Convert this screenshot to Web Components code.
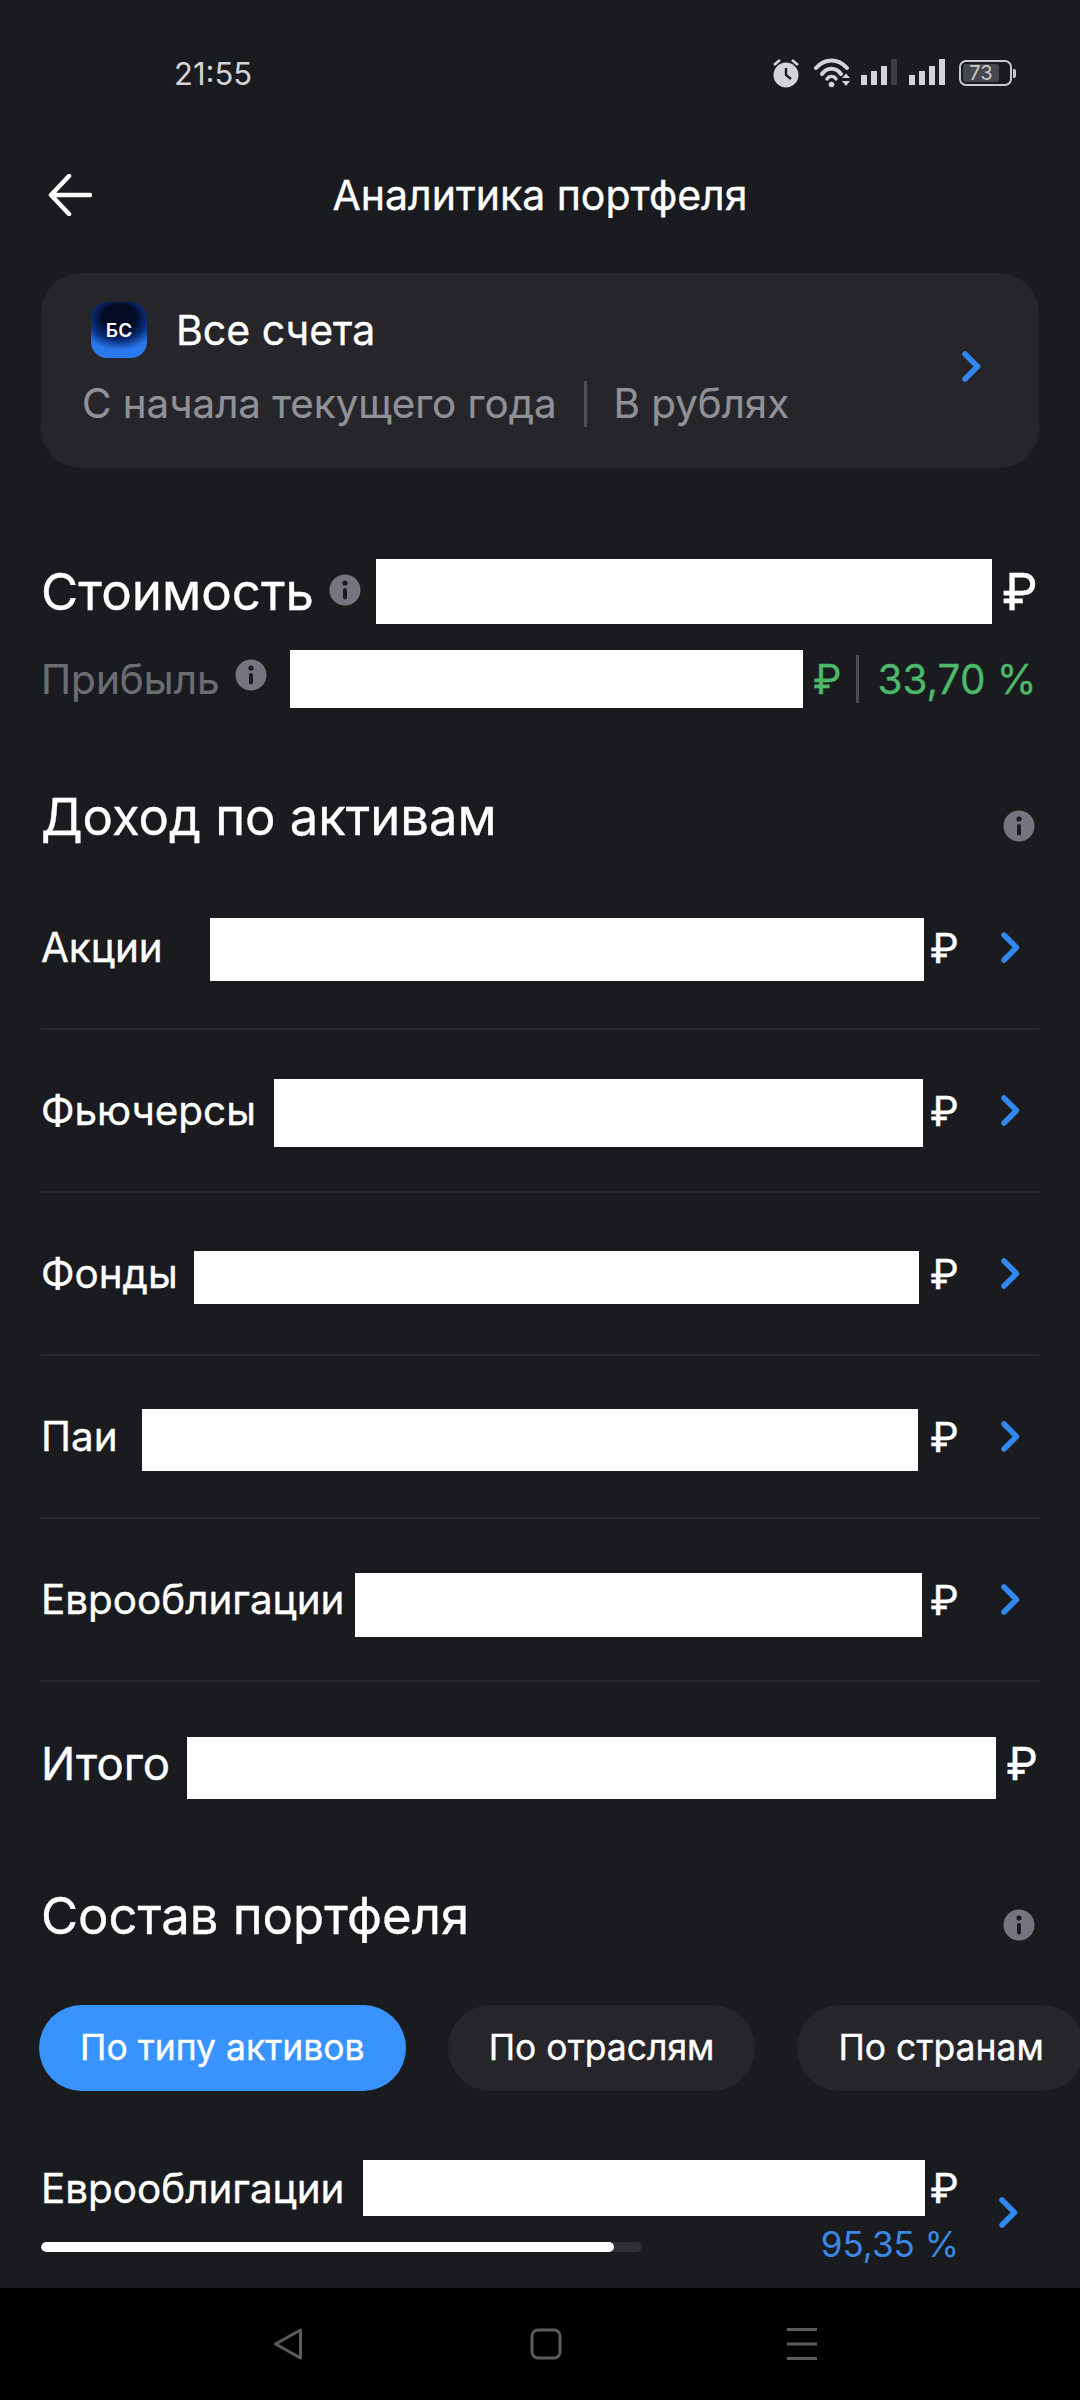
<!DOCTYPE html>
<html lang="ru">
<head>
<meta charset="utf-8">
<title>Аналитика портфеля</title>
<style>
	html, body { margin: 0; padding: 0; background: #1a1b1f; }
	/* regular weight runs thin against the reference, medium runs too wide */
	body { width: 1080px; height: 2400px; overflow: hidden; display: flex; flex-direction: column; color: #fff; font-family: Inter, "Noto Sans", sans-serif; font-weight: 400; -webkit-text-stroke: 0.35px currentColor; }
</style>
</head>
<body>
<status-bar></status-bar>
<app-header>Аналитика портфеля</app-header>
<account-card></account-card>

<value-row></value-row>
<profit-row></profit-row>

<section-title top="78">Доход по активам</section-title>
<asset-row label="Акции" left="210" width="714" height="63" shift="3"></asset-row>
<asset-row label="Фьючерсы" left="274" width="649" height="68" shift="4"></asset-row>
<asset-row label="Фонды" left="194" width="725" height="53" shift="7"></asset-row>
<asset-row label="Паи" left="142" width="776" height="62" shift="6"></asset-row>
<asset-row label="Еврооблигации" left="355" width="567" height="64" shift="10"></asset-row>
<total-row></total-row>

<section-title top="41">Состав портфеля</section-title>
<pill-tabs></pill-tabs>
<composition-row></composition-row>
<nav-bar></nav-bar>

<script>
	const chevron = `<svg width="22" height="31" viewBox="0 0 22 31" fill="none"><path d="M3 3 L15.500 15.500 L3 28" stroke="#3189f0" stroke-width="5.500" stroke-linecap="round" stroke-linejoin="round"/></svg>`;
	const signal = (last) => `<svg width="36" height="28" viewBox="0 0 36 28" fill="#d4d4d6"><rect x="0" y="16" width="6" height="10"/><rect x="10" y="12" width="6" height="14"/><rect x="20" y="7" width="6" height="19"/><rect x="30" y="0" width="6" height="26" fill="${last}"/></svg>`;

	// small helper, every element here is just markup plus styles
	function define(name, render) {
		customElements.define(name, class extends HTMLElement {
			connectedCallback() {
				if (this.shadowRoot) return;
				this.attachShadow({ mode: "open" }).innerHTML = render(this);
			}
		});
	}

	define("info-icon", () => `
		<style>:host { display: inline-flex; flex: none; width: 32px; height: 32px; }</style>
		<svg width="32" height="32" viewBox="0 0 32 32"><circle cx="16" cy="16" r="15.5" fill="#74757f"/><circle cx="16" cy="9" r="2.6" fill="#1a1b1f"/><rect x="14" y="14" width="4" height="11.5" rx="2" fill="#1a1b1f"/></svg>`);

	define("redact-box", (el) => `
		<style>:host { display: block; flex: none; background: #fff; width: ${el.getAttribute("width")}px; height: ${el.getAttribute("height")}px; }</style>`);

	define("status-bar", () => `
		<style>
			:host { display: flex; flex: none; align-items: center; height: 146px; padding: 0 68px 0 174px; box-sizing: border-box; -webkit-text-stroke: 0; }
			.time { font-size: 31px; color: #d4d4d6; flex: 1; }
			.icons { display: flex; align-items: center; gap: 12px; }
			.batt { position: relative; width: 53px; height: 26px; border: 2px solid #c9c9cb; border-radius: 7px; box-sizing: border-box; margin-left: 2px; display: flex; padding: 2px; }
			.batt b { width: 36px; background: #46474c; border-radius: 3px; font: 400 20px Inter, sans-serif; color: #c9c9cb; text-align: center; line-height: 18px; }
			.batt::after { content: ""; position: absolute; right: -6px; top: 7px; width: 3px; height: 9px; background: #c9c9cb; border-radius: 0 2px 2px 0; }
			svg { display: block; }
		</style>
		<span class="time">21:55</span>
		<div class="icons">
			<svg width="28" height="30" viewBox="0 0 28 30"><circle cx="14" cy="17" r="12.5" fill="#d4d4d6"/><path d="M14 10 V17 L19 21" fill="none" stroke="#1a1b1f" stroke-width="2.4"/><path d="M2 7 L8 2 M26 7 L20 2" stroke="#d4d4d6" stroke-width="2.6"/></svg>
			<svg width="38" height="30" viewBox="0 0 38 30" fill="none" stroke="#d4d4d6" stroke-linecap="round" style="margin-left:2px"><path d="M2 10 C11 0 24 0 33 10" stroke-width="4"/><path d="M8 16 C13 9 22 9 27 16" stroke-width="4"/><path d="M13 21 C15 17.500 20 17.500 22 21" stroke-width="3.400"/><circle cx="17.500" cy="26.500" r="2.800" fill="#d4d4d6" stroke="none"/><path d="M28 20 L32 15.500 L36 20 Z M28 23 L36 23 L32 28 Z" fill="#d4d4d6" stroke="none"/></svg>
			<div style="margin-left:-3px">${signal("#3c3d42")}</div>
			${signal("#d4d4d6")}
			<div class="batt"><b>73</b></div>
		</div>`);

	define("app-header", () => `
		<style>
			:host { display: grid; flex: none; grid-template-columns: 1fr auto 1fr; align-items: center; height: 97px; padding: 0 48px; font-size: 41px; }
			svg { display: block; }
		</style>
		<svg width="44" height="42" viewBox="0 0 44 42" fill="none" stroke="#fff" stroke-width="4.500" stroke-linecap="round" stroke-linejoin="round"><path d="M21 2 L3 21 L21 40 M4 21 H42"/></svg>
		<span><slot></slot></span>`);

	define("account-card", () => `
		<style>
			:host { display: flex; flex: none; align-items: flex-start; margin: 30px 41px 0; height: 195px; border-radius: 40px; background: #26262a; padding: 29px 55px 0 41px; box-sizing: border-box; }
			.main { flex: 1; }
			.top { display: flex; align-items: center; gap: 29px; margin-left: 9px; font-size: 41px; }
			.logo { width: 56px; height: 56px; border-radius: 16px; display: flex; align-items: center; justify-content: center; font-size: 19px; font-weight: 600; -webkit-text-stroke: 0; background: radial-gradient(ellipse 72% 58% at 50% 28%, #020a24 40%, #0a2e78 70%, #2a78ee 100%), #2a78ee; }
			.sub { display: flex; align-items: center; margin-top: 21px; font-size: 40.300px; color: #909196; white-space: nowrap; -webkit-text-stroke: 0.2px currentColor; }
			.sub i { width: 3px; height: 46px; background: #4f5055; margin: 0 27px; }
			svg { margin-top: 49px; }
		</style>
		<div class="main">
			<div class="top"><span class="logo">БС</span><span>Все счета</span></div>
			<div class="sub"><span>С начала текущего года</span><i></i><span>В рублях</span></div>
		</div>
		${chevron}`);

	define("value-row", () => `
		<style>
			:host { display: flex; flex: none; align-items: center; margin: 91px 41px 0; font-size: 51px; }
			.l { width: 288px; flex: none; white-space: nowrap; }
			info-icon { margin: -4px 15px 0 0; }
			.r { margin-left: 10px; }
		</style>
		<span class="l">Стоимость</span>
		<info-icon></info-icon>
		<redact-box width="616" height="65"></redact-box>
		<span class="r">₽</span>`);

	define("profit-row", () => `
		<style>
			:host { display: flex; flex: none; align-items: center; margin: 26px 41px 0; font-size: 40.500px; color: #6c6d72; white-space: nowrap; -webkit-text-stroke: 0.2px currentColor; }
			.l { width: 194px; flex: none; }
			info-icon { margin: -8px 23px 0 0; }
			.g { color: #4eb86a; -webkit-text-stroke: 0.3px #4eb86a; }
			i { width: 3px; height: 48px; background: #4b4c51; margin: 0 18px 0 15px; }
			.r { margin-left: 10px; }
		</style>
		<span class="l">Прибыль</span>
		<info-icon></info-icon>
		<redact-box width="513" height="58"></redact-box>
		<span class="g r">₽</span><i></i><span class="g">33,70 %</span>`);

	define("section-title", (el) => `
		<style>
			:host { display: flex; flex: none; align-items: center; justify-content: space-between; height: 60px; margin: ${el.getAttribute("top")}px 45px 21px 41px; font-size: 50.800px; }
			info-icon { margin-top: 20px; }
		</style>
		<slot></slot><info-icon></info-icon>`);

	define("asset-row", (el) => `
		<style>
			:host { display: flex; flex: none; align-items: center; height: 163px; box-sizing: border-box; margin: 0 41px; border-bottom: 2px solid #27282c; font-size: 40.400px; }
			.main { display: flex; align-items: center; width: 889px; flex: none; }
			.l { width: ${el.getAttribute("left") - 41}px; flex: none; white-space: nowrap; }
			redact-box { margin-top: ${el.getAttribute("shift")}px; }
			.r { flex: 1; font-size: 41px; }
			svg { margin-right: 16px; }
		</style>
		<div class="main">
			<span class="l">${el.getAttribute("label")}</span>
			<redact-box width="${el.getAttribute("width")}" height="${el.getAttribute("height")}"></redact-box>
		</div>
		<span class="r">₽</span>
		${chevron}`);

	define("total-row", () => `
		<style>
			:host { display: flex; flex: none; align-items: center; height: 162px; margin: 0 41px; font-size: 45.500px; }
			.l { width: 146px; flex: none; }
			redact-box { margin-top: 10px; }
			.r { margin-left: 10px; }
		</style>
		<span class="l">Итого</span>
		<redact-box width="809" height="62"></redact-box>
		<span class="r">₽</span>`);

	define("pill-tabs", () => `
		<style>
			:host { display: flex; flex: none; gap: 42px; margin: 39px 0 0 39px; font-size: 35.500px; white-space: nowrap; overflow: hidden; }
			span { flex: none; height: 86px; line-height: 86px; padding: 0 41px; border-radius: 43px; background: #26262a; box-sizing: border-box; }
			.on { background: #3893fe; }
		</style>
		<span class="on">По типу активов</span><span>По отраслям</span><span>По странам</span>`);

	define("composition-row", () => `
		<style>
			:host { display: grid; flex: none; grid-template-columns: 322px 562px 34px 1fr; grid-template-rows: 56px auto; margin: 69px 41px 0; height: 128px; font-size: 40.400px; align-items: center; }
			.r { font-size: 41px; margin-left: 5px; }
			.chev { grid-column: 4; grid-row: 1 / 3; align-self: start; margin: 37px 0 0 40px; }
			.bar { grid-column: 1 / 3; grid-row: 2; width: 601px; height: 10px; border-radius: 5px; background: #2f3035; overflow: hidden; align-self: start; margin-top: 26px; }
			.bar b { display: block; width: 573px; height: 10px; border-radius: 5px; background: #fff; }
			.pct { grid-column: 2 / 4; grid-row: 2; justify-self: end; font-size: 35px; color: #3a88e6; align-self: start; margin-top: 7px; -webkit-text-stroke: 0; }
			svg { display: block; }
		</style>
		<span>Еврооблигации</span>
		<redact-box width="562" height="56"></redact-box>
		<span class="r">₽</span>
		<div class="chev">${chevron}</div>
		<div class="bar"><b></b></div>
		<span class="pct">95,35 %</span>`);

	define("nav-bar", () => `
		<style>
			:host { display: flex; flex: none; margin-top: auto; height: 112px; background: #000; align-items: center; padding-left: 273px; box-sizing: border-box; }
			svg { display: block; flex: none; }
		</style>
		<svg width="30" height="32" viewBox="0 0 30 32" fill="none" stroke="#5c5c5c" stroke-width="3" stroke-linejoin="round" style="margin-right:227px"><path d="M27.500 2 L2.500 16 L27.500 30 Z"/></svg>
		<svg width="32" height="32" viewBox="0 0 32 32" fill="none" stroke="#5c5c5c" stroke-width="3" style="margin-right:224px"><rect x="2" y="2" width="28" height="28" rx="6"/></svg>
		<svg width="32" height="32" viewBox="0 0 32 32" fill="#5c5c5c"><rect x="1" y="0" width="30" height="3"/><rect x="1" y="14.500" width="30" height="3"/><rect x="1" y="29" width="30" height="3"/></svg>`);
</script>
</body>
</html>
